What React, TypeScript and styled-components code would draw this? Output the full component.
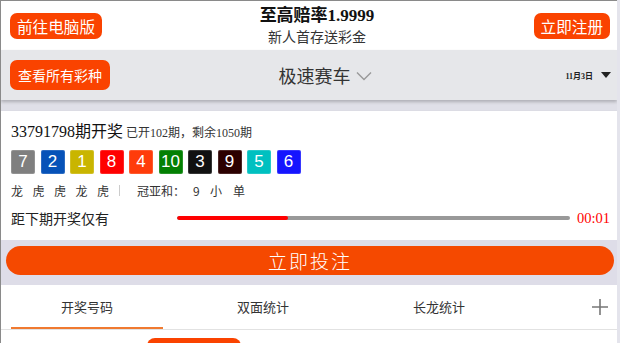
import styled, { createGlobalStyle } from 'styled-components';

const GlobalStyle = createGlobalStyle`
  html, body {
    margin: 0;
    padding: 0;
    background: #e4e4ec;
    font-family: "Noto Sans CJK SC", "Noto Sans", sans-serif;
    color: #222;
  }
`;

const ORANGE = '#fa4300';

const Page = styled.div`
  width: 616px;
  height: 342px;
  overflow: hidden;
  border-top: 1px solid #8a8a8a;
  border-left: 1px solid #8a8a8a;
  background: #e4e4ec;
`;

const Header = styled.header`
  height: 49px;
  background: #fff;
  display: grid;
  grid-template-columns: 1fr auto 1fr;
  align-items: center;
  padding: 0 7px 0 9px;
`;

const OrangeButton = styled.div<{ $size?: number; $height?: number; $pad?: number }>`
  background: ${ORANGE};
  color: #fff;
  border-radius: 7px;
  height: ${p => p.$height ?? 26}px;
  line-height: ${p => p.$height ?? 26}px;
  padding: 0 ${p => p.$pad ?? 7}px;
  font-size: ${p => p.$size ?? 15.6}px;
  white-space: nowrap;
`;

const Left = styled.div`
  justify-self: start;
`;

const Right = styled.div`
  justify-self: end;
  display: flex;
  align-items: center;
`;

const HeaderCenter = styled.div`
  text-align: center;
  padding: 1px 0 0 14px;
`;

const Title = styled.div`
  font-family: "Liberation Serif", "Noto Sans CJK SC", serif;
  font-weight: bold;
  font-size: 17px;
  line-height: 20px;
  color: #111;
`;

const SubTitle = styled.div`
  font-size: 14px;
  line-height: 20px;
  color: #333;
`;

const NavBar = styled.nav`
  position: relative;
  z-index: 1;
  height: 50px;
  background: #e6e7ea;
  display: grid;
  grid-template-columns: 1fr auto 1fr;
  align-items: center;
  padding: 0 6px 0 9px;
  box-shadow: 0 2px 3px rgba(0, 0, 0, 0.22);
`;

const GameName = styled.div`
  position: relative;
  font-size: 18px;
  color: #333;
  margin-left: 8px;
`;

const Chevron = styled.svg`
  position: absolute;
  left: calc(100% + 5px);
  top: 50%;
  margin-top: -4px;
`;

const DateText = styled.span`
  font-family: "Liberation Serif", "Noto Sans CJK SC", serif;
  font-size: 8px;
  font-weight: bold;
  color: #222;
  margin-right: 8px;
`;

const Gap = styled.div`
  height: 10px;
  background: #e0e0e8;
`;

const Card = styled.section`
  background: #fff;
  border-top: 1px solid #dcdce4;
  padding: 10px 0 12px 10px;
`;

const IssueLine = styled.div`
  font-family: "Liberation Serif", "Noto Sans CJK SC", serif;
  font-size: 16px;
  line-height: 22px;
  color: #111;
`;

const IssueSmall = styled.span`
  font-size: 12px;
  color: #333;
  margin-left: 3px;
`;

const Balls = styled.div`
  display: flex;
  gap: 5.5px;
  margin-top: 6px;
`;

const Ball = styled.div<{ $color: string }>`
  width: 24px;
  height: 24px;
  border-radius: 2px;
  background: ${p => p.$color};
  color: #fff;
  font-family: "Liberation Sans", Arial, sans-serif;
  font-size: 17px;
  display: flex;
  align-items: center;
  justify-content: center;
  box-shadow: inset 0 0 0 1px rgba(255, 255, 255, 0.15);
`;

const Stats = styled.div`
  display: flex;
  align-items: center;
  margin-top: 8px;
  height: 16px;
  font-size: 12px;
  color: #333;
`;

const StatItem = styled.span<{ $w: number }>`
  width: ${p => p.$w}px;
`;

const Divider = styled.span`
  width: 1px;
  height: 11px;
  background: #ccc;
  margin: 0 17px 0 0;
`;

const Countdown = styled.div`
  display: flex;
  align-items: center;
  margin-top: 10px;
  height: 20px;
`;

const CountLabel = styled.span`
  font-size: 14px;
  color: #222;
  width: 166px;
`;

const Track = styled.div`
  width: 393px;
  height: 4px;
  border-radius: 2px;
  background: #999;
  overflow: hidden;
`;

const Fill = styled.div`
  height: 100%;
  background: #f00;
  border-radius: 2px;
`;

const Timer = styled.span`
  font-family: "Liberation Serif", serif;
  font-size: 14.5px;
  color: #f00;
  margin-left: 7px;
`;

const Band = styled.div`
  background: #dedde8;
  margin-top: 0;
  padding: 6px 3px 10px 5px;
`;

const BetButton = styled.div`
  height: 29px;
  border-radius: 15px;
  background: #f54900;
  color: #fff;
  font-size: 19px;
  letter-spacing: 2px;
  display: flex;
  align-items: center;
  justify-content: center;
  font-weight: 300;
`;

const Tabs = styled.div`
  background: #fff;
  display: flex;
  align-items: stretch;
  gap: 24px;
  height: 44px;
  padding-left: 10px;
  border-bottom: 1px solid #e2e2e2;
`;

const Tab = styled.div<{ $active?: boolean }>`
  width: 152px;
  font-size: 13px;
  color: #333;
  display: flex;
  align-items: center;
  justify-content: center;
  border-bottom: 2px solid ${p => (p.$active ? '#f07a30' : 'transparent')};
`;

const Plus = styled.div`
  margin-left: auto;
  display: flex;
  align-items: center;
  padding-right: 8px;
`;

const Below = styled.div`
  background: #fff;
  height: 20px;
  padding: 8px 0 0 146px;
`;

const Chip = styled.div`
  width: 94px;
  height: 20px;
  border-radius: 8px 8px 0 0;
  background: ${ORANGE};
`;

const BALLS: [number, string][] = [
  [7, '#7f7f7f'],
  [2, '#0652b8'],
  [1, '#c9b500'],
  [8, '#ff0000'],
  [4, '#ff3c0a'],
  [10, '#038003'],
  [3, '#111111'],
  [9, '#2c0000'],
  [5, '#00c0c0'],
  [6, '#1515ff'],
];

export default function App() {
  return (
    <>
      <GlobalStyle />
      <Page>
        <Header>
          <Left>
            <OrangeButton>前往电脑版</OrangeButton>
          </Left>
          <HeaderCenter>
            <Title>至高赔率1.9999</Title>
            <SubTitle>新人首存送彩金</SubTitle>
          </HeaderCenter>
          <Right>
            <OrangeButton>立即注册</OrangeButton>
          </Right>
        </Header>
        <NavBar>
          <Left>
            <OrangeButton $size={14} $height={30} $pad={8}>查看所有彩种</OrangeButton>
          </Left>
          <GameName>
            极速赛车
            <Chevron width="16" height="10" viewBox="0 0 16 10">
              <path d="M1 1.5 L8 8.5 L15 1.5" fill="none" stroke="#999" strokeWidth="1.4" />
            </Chevron>
          </GameName>
          <Right>
            <DateText>11月3日</DateText>
            <svg width="10" height="6" viewBox="0 0 10 6">
              <path d="M0 0 H10 L5 6 Z" fill="#222" />
            </svg>
          </Right>
        </NavBar>
        <Gap />
        <Card>
          <IssueLine>
            33791798期开奖
            <IssueSmall>已开102期，剩余1050期</IssueSmall>
          </IssueLine>
          <Balls>
            {BALLS.map(([n, c]) => (
              <Ball key={n} $color={c}>{n}</Ball>
            ))}
          </Balls>
          <Stats>
            <StatItem $w={21.5}>龙</StatItem>
            <StatItem $w={21.5}>虎</StatItem>
            <StatItem $w={21.5}>虎</StatItem>
            <StatItem $w={21.5}>龙</StatItem>
            <StatItem $w={22}>虎</StatItem>
            <Divider />
            <StatItem $w={56}>冠亚和：</StatItem>
            <StatItem $w={17}>9</StatItem>
            <StatItem $w={23}>小</StatItem>
            <StatItem $w={14}>单</StatItem>
          </Stats>
          <Countdown>
            <CountLabel>距下期开奖仅有</CountLabel>
            <Track>
              <Fill style={{ width: `${(111 / 393) * 100}%` }} />
            </Track>
            <Timer>00:01</Timer>
          </Countdown>
        </Card>
        <Band>
          <BetButton>立即投注</BetButton>
        </Band>
        <Tabs>
          <Tab $active>开奖号码</Tab>
          <Tab>双面统计</Tab>
          <Tab>长龙统计</Tab>
          <Plus>
            <svg width="18" height="18" viewBox="0 0 18 18">
              <path d="M9 1 V17 M1 9 H17" stroke="#777" strokeWidth="1.6" />
            </svg>
          </Plus>
        </Tabs>
        <Below>
          <Chip />
        </Below>
      </Page>
    </>
  );
}
